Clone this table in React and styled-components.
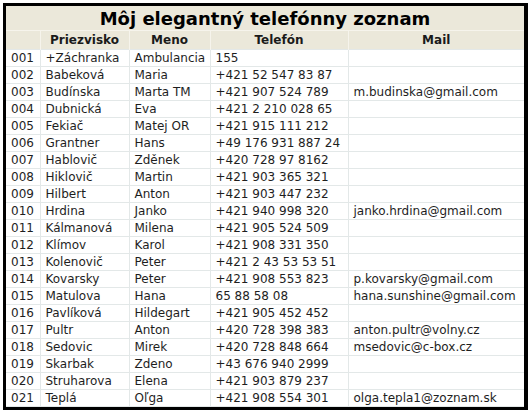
import React from "react";
import styled, { createGlobalStyle } from "styled-components";

const contacts = [
  ["001", "+Záchranka", "Ambulancia", "155", ""],
  ["002", "Babeková", "Maria", "+421 52 547 83 87", ""],
  ["003", "Budínska", "Marta TM", "+421 907 524 789", "m.budinska@gmail.com"],
  ["004", "Dubnická", "Eva", "+421 2 210 028 65", ""],
  ["005", "Fekiač", "Matej OR", "+421 915 111 212", ""],
  ["006", "Grantner", "Hans", "+49 176 931 887 24", ""],
  ["007", "Hablovič", "Zděnek", "+420 728 97 8162", ""],
  ["008", "Hiklovič", "Martin", "+421 903 365 321", ""],
  ["009", "Hilbert", "Anton", "+421 903 447 232", ""],
  ["010", "Hrdina", "Janko", "+421 940 998 320", "janko.hrdina@gmail.com"],
  ["011", "Kálmanová", "Milena", "+421 905 524 509", ""],
  ["012", "Klímov", "Karol", "+421 908 331 350", ""],
  ["013", "Kolenovič", "Peter", "+421 2 43 53 53 51", ""],
  ["014", "Kovarsky", "Peter", "+421 908 553 823", "p.kovarsky@gmail.com"],
  ["015", "Matulova", "Hana", "65 88 58 08", "hana.sunshine@gmail.com"],
  ["016", "Pavlíková", "Hildegart", "+421 905 452 452", ""],
  ["017", "Pultr", "Anton", "+420 728 398 383", "anton.pultr@volny.cz"],
  ["018", "Sedovic", "Mirek", "+420 728 848 664", "msedovic@c-box.cz"],
  ["019", "Skarbak", "Zdeno", "+43 676 940 2999", ""],
  ["020", "Struharova", "Elena", "+421 903 879 237", ""],
  ["021", "Teplá", "Oľga", "+421 908 554 301", "olga.tepla1@zoznam.sk"],
];

const columns = [
  { label: "", width: 34 },
  { label: "Priezvisko", width: 89 },
  { label: "Meno", width: 81 },
  { label: "Telefón", width: 138 },
  { label: "Mail", width: 176 },
];

const App = () => {
  return (
    <>
      <GlobalStyle />
      <Frame>
        <Table>
          <colgroup>
            {columns.map((c, i) => (
              <col key={i} style={{ width: c.width }} />
            ))}
          </colgroup>
          <thead>
            <tr>
              <TitleCell colSpan={5}>Môj elegantný telefónny zoznam</TitleCell>
            </tr>
            <tr>
              {columns.map((c, i) => (
                <HeadCell key={i}>{c.label}</HeadCell>
              ))}
            </tr>
          </thead>
          <tbody>
            {contacts.map((row) => (
              <Row key={row[0]}>
                {row.map((value, i) => (
                  <Cell key={i}>{value}</Cell>
                ))}
              </Row>
            ))}
          </tbody>
        </Table>
      </Frame>
    </>
  );
};

export default App;

const GlobalStyle = createGlobalStyle`
  body {
    margin: 0;
    background: #ffffff;
    font-family: "DejaVu Sans", Verdana, sans-serif;
  }
`;

const Frame = styled.div`
  margin: 3px 0 0 3px;
  width: 518px;
  border: 3px solid #000;
  border-right-width: 4px;
  background: #fff;
`;

const Table = styled.table`
  width: 518px;
  table-layout: fixed;
  border-collapse: collapse;
  font-size: 12px;
  color: #1e1e1e;
`;

const TitleCell = styled.th`
  height: 24px;
  padding: 0;
  background: #ebe8da;
  font-size: 18px;
  font-weight: bold;
  text-align: center;
  color: #000;
  border-bottom: 1px solid #f6f4ec;
`;

const HeadCell = styled.th`
  height: 18px;
  padding: 0 4px;
  background: #ebe8da;
  font-size: 12px;
  font-weight: bold;
  text-align: center;
  color: #1a1a1a;
  border-left: 1px solid #f6f4ec;
  &:first-child {
    border-left: none;
  }
`;

const Row = styled.tr`
  height: 17px;
`;

const Cell = styled.td`
  padding: 0 4px 0 5px;
  border: 1px solid #e3e8e8;
  white-space: nowrap;
  overflow: hidden;
  line-height: 15px;
  &:first-child {
    border-left: none;
  }
  &:last-child {
    border-right: none;
  }
`;
